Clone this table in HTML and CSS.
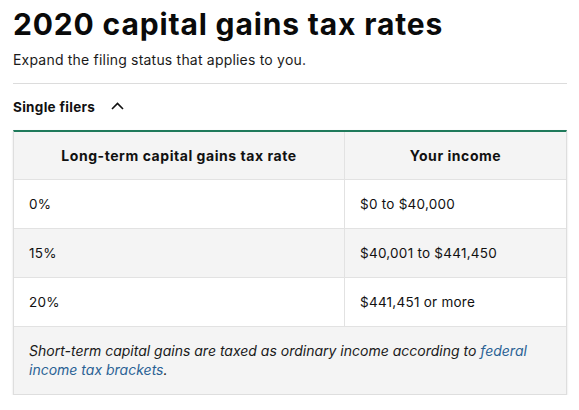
FILE: index.html
```html
<!DOCTYPE html>
<html>
<head>
<meta charset="utf-8">
<link rel="stylesheet" href="styles.css">
</head>
<body>
<main class="page">
  <h1 class="title">2020 capital gains tax rates</h1>
  <p class="lead">Expand the filing status that applies to you.</p>
  <div class="divider"></div>
  <div class="toggle">
    <span class="toggle-label">Single filers</span>
    <svg class="chev" width="13" height="8" viewBox="0 0 13 8"><path d="M1 7 L6.5 1.5 L12 7" fill="none" stroke="#111" stroke-width="1.6"/></svg>
  </div>
  <div class="card">
    <table class="rates">
      <thead>
        <tr class="shade"><th class="c1">Long-term capital gains tax rate</th><th class="c2">Your income</th></tr>
      </thead>
      <tbody>
        <tr><td class="c1">0%</td><td class="c2">$0 to $40,000</td></tr>
        <tr class="shade"><td class="c1">15%</td><td class="c2">$40,001 to $441,450</td></tr>
        <tr><td class="c1">20%</td><td class="c2">$441,451 or more</td></tr>
      </tbody>
    </table>
    <p class="note">Short-term capital gains are taxed as ordinary income according to <a href="#" class="link">federal</a> <a href="#" class="link">income tax brackets</a>.</p>
  </div>
</main>
</body>
</html>
```

FILE: styles.css
```css
html, body { margin: 0; padding: 0; background: #fff; }
body { font-family: Inter, "Noto Sans", sans-serif; color: #111; }
.page { padding: 0 12px 0 13px; }
.title { margin: 0; padding-top: 6px; font-size: 30px; line-height: 36px; font-weight: 700; letter-spacing: 0.85px; color: #0a0a0a; }
.lead { margin: 8px 0 0; font-size: 14px; line-height: 20px; letter-spacing: 0.2px; color: #1a1a1a; }
.divider { height: 1px; background: #dcdcdc; margin-top: 13px; }
.toggle { display: flex; align-items: center; gap: 16px; height: 46px; }
.toggle-label { font-size: 13.5px; font-weight: 700; letter-spacing: 0.3px; }
.chev { display: block; margin-top: -2px; }
.card { border: 1px solid #dedede; border-top: 2px solid #1f7a5b; background: #f4f4f4; box-shadow: 0 1px 2px rgba(0,0,0,0.12); }
.rates { width: 100%; border-collapse: collapse; }
.rates th, .rates td { height: 48px; padding: 0 15px; font-size: 13.5px; letter-spacing: 0.25px; border-bottom: 1px solid #e2e2e2; background: #fff; }
.rates .shade th, .rates .shade td { background: #f4f4f4; }
.rates th { font-weight: 700; text-align: center; height: 47px; font-size: 14px; letter-spacing: 0.55px; }
.rates .c1 { width: 300px; border-right: 1px solid #e2e2e2; }
.rates td { text-align: left; }
.note { margin: 0; padding: 14px 15px 15px; font-size: 14px; line-height: 19px; font-style: italic; color: #1a1a1a; }
.link { color: #2a6294; text-decoration: none; }
```
